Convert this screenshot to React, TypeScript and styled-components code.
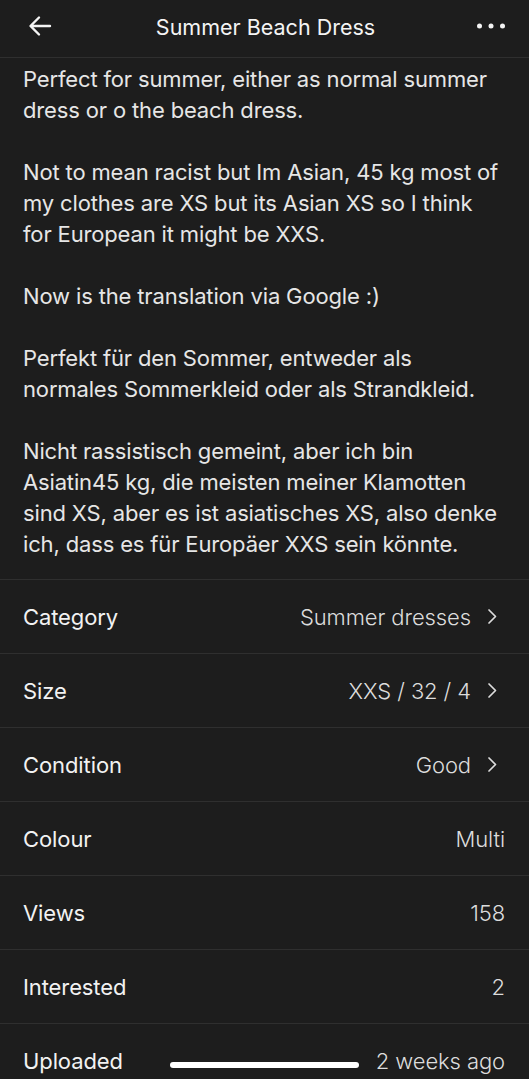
import styled, { createGlobalStyle } from 'styled-components';

const GlobalStyle = createGlobalStyle`
  html, body {
    margin: 0;
    padding: 0;
    background-color: #1d1d1d;
  }
  body {
    font-family: Inter, "Noto Sans", sans-serif;
    color: #ececec;
    -webkit-font-smoothing: antialiased;
  }
`;

const Screen = styled.div`
  width: 529px;
  height: 1079px;
  overflow: hidden;
  position: relative;
  background-color: #1d1d1d;
`;

const Header = styled.div`
  height: 57px;
  padding: 0 22px 0 24px;

  display: flex;
  align-items: center;
  justify-content: space-between;

  border-bottom: 1px solid #2f2f2f;
`;

const HeaderTitle = styled.span`
  font-size: 21.5px;
  font-weight: 400;
  color: #f4f4f4;
  margin-top: -4px;
`;

const IconButton = styled.span`
  width: 32px;
  height: 32px;
  margin-top: -6px;

  display: flex;
  align-items: center;
  justify-content: center;
`;

const Description = styled.div`
  padding: 6px 23px 19px;

  font-size: 22px;
  line-height: 31px;
  font-weight: 400;
  color: #e6e6e6;
  letter-spacing: -0.15px;

  border-bottom: 1px solid #2f2f2f;
`;

const Paragraph = styled.p`
  margin: 0 0 31px;

  &:last-child {
    margin-bottom: 0;
  }
`;

const Row = styled.div`
  height: 73px;
  padding: 0 24px 0 23px;

  display: flex;
  align-items: center;
  justify-content: space-between;

  border-bottom: 1px solid #2f2f2f;
  font-size: 22px;
  letter-spacing: -0.1px;
`;

const Label = styled.span`
  color: #f2f2f2;
  font-weight: 400;
`;

const Value = styled.span<{ link?: boolean }>`
  display: flex;
  align-items: center;
  gap: 16px;
  margin-right: ${(props) => (props.link ? '8px' : '0')};

  color: #dcdcdc;
  font-weight: 300;
`;

const HomeIndicator = styled.div`
  position: absolute;
  left: 170px;
  bottom: 11px;

  width: 189px;
  height: 6px;

  border-radius: 3px;
  background-color: #ffffff;
`;

const Chevron = () => (
  <svg width="10" height="17" viewBox="0 0 10 17" fill="none">
    <path d="M2 2 L8.5 8.5 L2 15" stroke="#dcdcdc" strokeWidth="1.7" strokeLinecap="round" strokeLinejoin="round" />
  </svg>
);

const rows: { label: string; value: string; link?: boolean }[] = [
  { label: 'Category', value: 'Summer dresses', link: true },
  { label: 'Size', value: 'XXS / 32 / 4', link: true },
  { label: 'Condition', value: 'Good', link: true },
  { label: 'Colour', value: 'Multi' },
  { label: 'Views', value: '158' },
  { label: 'Interested', value: '2' },
  { label: 'Uploaded', value: '2 weeks ago' },
];

export default function App() {
  return (
    <Screen>
      <GlobalStyle />
      <Header>
        <IconButton>
          <svg width="24" height="22" viewBox="0 0 24 22" fill="none">
            <path d="M22 11 H3 M11 2.5 L2.5 11 L11 19.5" stroke="#f4f4f4" strokeWidth="2.4" strokeLinecap="round" strokeLinejoin="round" />
          </svg>
        </IconButton>
        <HeaderTitle>Summer Beach Dress</HeaderTitle>
        <IconButton>
          <svg width="30" height="8" viewBox="0 0 30 8">
            <circle cx="3.5" cy="4" r="2.5" fill="#f4f4f4" />
            <circle cx="15" cy="4" r="2.5" fill="#f4f4f4" />
            <circle cx="26.5" cy="4" r="2.5" fill="#f4f4f4" />
          </svg>
        </IconButton>
      </Header>
      <Description>
        <Paragraph>
          Perfect for summer, either as normal summer
          <br />
          dress or o the beach dress.
        </Paragraph>
        <Paragraph>
          Not to mean racist but Im Asian, 45 kg most of
          <br />
          my clothes are XS but its Asian XS so I think
          <br />
          for European it might be XXS.
        </Paragraph>
        <Paragraph>Now is the translation via Google :)</Paragraph>
        <Paragraph>
          Perfekt für den Sommer, entweder als
          <br />
          normales Sommerkleid oder als Strandkleid.
        </Paragraph>
        <Paragraph>
          Nicht rassistisch gemeint, aber ich bin
          <br />
          Asiatin45 kg, die meisten meiner Klamotten
          <br />
          sind XS, aber es ist asiatisches XS, also denke
          <br />
          ich, dass es für Europäer XXS sein könnte.
        </Paragraph>
      </Description>
      {rows.map((row) => (
        <Row key={row.label}>
          <Label>{row.label}</Label>
          <Value link={row.link}>
            {row.value}
            {row.link && <Chevron />}
          </Value>
        </Row>
      ))}
      <HomeIndicator />
    </Screen>
  );
}
